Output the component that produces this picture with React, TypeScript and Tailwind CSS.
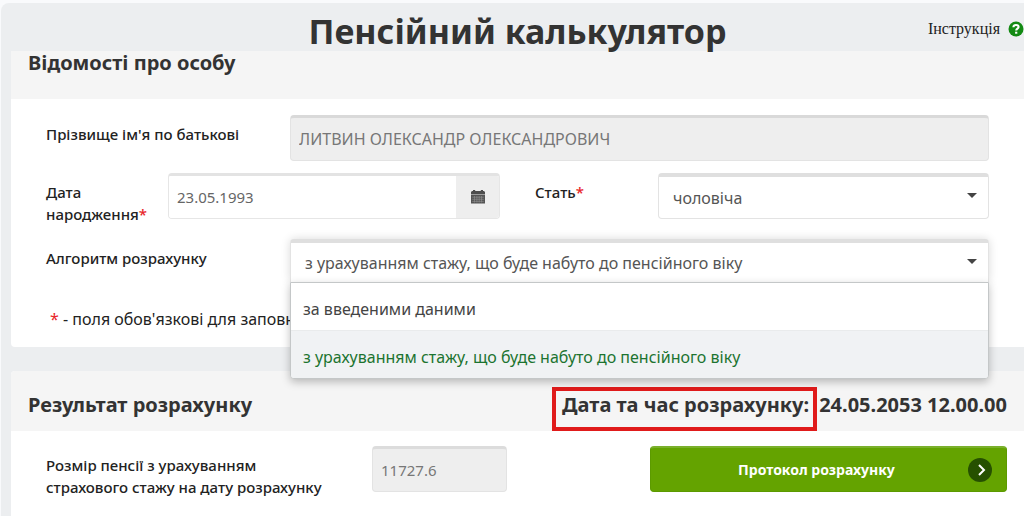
import React, { useState } from 'react';

interface AlgorithmOption {
  value: string;
  label: string;
}

const algorithms: AlgorithmOption[] = [
  { value: 'entered', label: 'за введеними даними' },
  { value: 'projected', label: 'з урахуванням стажу, що буде набуто до пенсійного віку' },
];

function CalendarIcon() {
  return (
    <svg viewBox="0 0 14 15" className="h-[15px] w-[14px]" aria-hidden="true">
      <path d="M1 1h1V0h2.200v1h5.600V0H12v1h1l1 1v2.400H0V2z" fill="#4d4d4d" />
      <path d="M0 5h14v8.500H0z" fill="#555" />
      <path d="M1.200 7.200h11.600M1.200 9.300h11.600M1.200 11.400h11.600M3.500 6v6.500M5.900 6v6.500M8.200 6v6.500M10.500 6v6.500" stroke="#929292" strokeWidth=".6" />
    </svg>
  );
}

function HelpIcon() {
  return (
    <svg viewBox="0 0 16 16" className="h-4 w-4 shrink-0" aria-hidden="true">
      <circle cx="8" cy="8" r="7.5" fill="#138a13" />
      <path d="M5.400 6.200C5.500 4.600 6.600 4 8 4c1.500 0 2.600.8 2.600 2 0 1.600-2.400 1.700-2.400 3.500" fill="none" stroke="#fff" strokeWidth="2.100" />
      <path d="M7.100 10.700h2.200v2H7.100z" fill="#fff" />
    </svg>
  );
}

function Caret() {
  return (
    <svg viewBox="0 0 10 5" className="pointer-events-none absolute top-5 right-3 h-[5px] w-[10px]" aria-hidden="true">
      <path d="M0 0h10L5 5z" fill="#444" />
    </svg>
  );
}

function Required() {
  return <span className="text-[#e8262a]">*</span>;
}

export default function App() {
  const [algorithm, setAlgorithm] = useState('projected');
  const [menuOpen, setMenuOpen] = useState(true);

  return (
    <div className="min-h-screen overflow-x-hidden bg-[#f9fafc] pt-[3px] pl-px font-['Noto_Sans','Open_Sans',sans-serif] text-[15px] leading-[22px] text-[#222]">
      <div className="min-h-screen rounded-tl-lg bg-[#eceef0] pl-[10px]">
        <header className="grid h-12 grid-cols-[1fr_auto_1fr] items-center">
          <h1 className="col-start-2 pt-2 text-[34px] leading-10 font-bold text-[#333]">Пенсійний калькулятор</h1>
          <a href="#help" className="flex items-center gap-2 justify-self-end pt-1 font-['Liberation_Serif',serif] text-base text-[#222]">
            Інструкція
            <HelpIcon />
          </a>
        </header>

        {/* Personal data */}
        <section className="rounded-bl bg-white">
          <h2 className="h-12 bg-[#f5f5f5] px-[17px] text-xl leading-6 font-bold text-[#333]">Відомості про особу</h2>

          <div className="px-[35px] pt-4 pb-[17px]">
            <div className="grid grid-cols-[244fr_699fr]">
              <label htmlFor="fullname" className="pt-2 font-medium">Прізвище ім'я по батькові</label>
              <input
                id="fullname"
                readOnly
                value="ЛИТВИН ОЛЕКСАНДР ОЛЕКСАНДРОВИЧ"
                className="h-[46px] w-full rounded border border-t-[3px] border-[#e3e3e3] border-t-[#d9d9d9] bg-[#eee] px-2 text-base text-[#777]"
              />
            </div>

            <div className="mt-3 grid grid-cols-[122fr_332fr_35fr_123fr_331fr]">
              <label htmlFor="birth" className="pt-2 font-medium">Дата народження<Required /></label>
              <div className="flex h-[46px] overflow-hidden rounded border border-t-[3px] border-[#e6e6e6] border-t-[#e3e3e3]">
                <input id="birth" defaultValue="23.05.1993" className="min-w-0 flex-1 bg-white px-2 text-[#666]" />
                <button type="button" aria-label="Календар" className="flex w-[43px] items-center justify-center bg-[#eee]">
                  <CalendarIcon />
                </button>
              </div>
              <label htmlFor="sex" className="col-start-4 pt-2 font-medium">Стать<Required /></label>
              <div className="relative">
                <select id="sex" className="block h-[46px] w-full appearance-none rounded border border-t-4 border-[#e3e3e3] border-t-[#dfdfdf] bg-white px-[14px] text-base text-[#555]">
                  <option>чоловіча</option>
                  <option>жіноча</option>
                </select>
                <Caret />
              </div>
            </div>

            <div className="mt-[14px] grid grid-cols-[244fr_699fr]">
              <label htmlFor="algorithm" className="pt-2 font-medium">Алгоритм розрахунку</label>
              <div className="relative">
                <select
                  id="algorithm"
                  value={algorithm}
                  onChange={(e) => setAlgorithm(e.target.value)}
                  onFocus={() => setMenuOpen(true)}
                  className="block h-[43px] w-full appearance-none rounded-t border border-t-4 border-b-0 border-[#e3e3e3] border-t-[#dfdfdf] bg-white px-[14px] text-base text-[#555] shadow-[0_0_10px_rgba(0,0,0,0.15)]"
                >
                  {algorithms.map((a) => (
                    <option key={a.value} value={a.value}>{a.label}</option>
                  ))}
                </select>
                <Caret />
                {menuOpen && (
                  <ul className="absolute top-full right-0 left-0 z-10 overflow-hidden rounded-b border border-[#c4c7c8] bg-white text-base shadow-[0_3px_8px_rgba(0,0,0,0.25)]">
                    {algorithms.map((a) => (
                      <li key={a.value} className="border-b border-[#e9ebec] last:border-b-0">
                        <button
                          type="button"
                          onClick={() => { setAlgorithm(a.value); setMenuOpen(false); }}
                          className={`block h-[47px] w-full px-3 pt-1 text-left ${a.value === algorithm ? 'bg-[#f0f2f4] text-[#1c7430]' : 'text-[#444]'}`}
                        >
                          {a.label}
                        </button>
                      </li>
                    ))}
                  </ul>
                )}
              </div>
            </div>

            <p className="mt-[26px] px-1 text-base leading-[22px]"><Required /> - поля обов'язкові для заповнення</p>
          </div>
        </section>

        {/* Calculation result */}
        <section className="mt-6 rounded-tl bg-white">
          <div className="flex h-[60px] items-center justify-between rounded-tl bg-[#f5f5f5] px-[17px] pt-2 text-xl font-bold text-[#333]">
            <h2>Результат розрахунку</h2>
            <p className="flex gap-[10px]">
              <span className="relative">
                Дата та час розрахунку:
                <span className="absolute -top-1 -right-2 -bottom-3 -left-2.5 border-4 border-[#e01b1b]" />
              </span>
              <span>24.05.2053 12.00.00</span>
            </p>
          </div>

          <div className="grid grid-cols-[326fr_135fr_143fr_357fr] pt-[15px] pr-[17px] pb-6 pl-[35px]">
            <label htmlFor="pension" className="pt-2 pr-10 font-medium">Розмір пенсії з урахуванням страхового стажу на дату розрахунку</label>
            <input
              id="pension"
              readOnly
              value="11727.6"
              className="h-[46px] w-full rounded border border-t-[3px] border-[#e3e3e3] border-t-[#dcdcdc] bg-[#eee] px-2 text-[#777]"
            />
            <button type="button" className="relative col-start-4 h-[46px] rounded border border-t-2 border-[#5c9a00] border-t-[#7ab02c] bg-[#64a300] pr-6 text-center text-sm font-bold text-white">
              Протокол розрахунку
              <span className="absolute top-[10px] right-[14px] flex h-6 w-6 items-center justify-center rounded-full bg-[#265000]">
                <svg viewBox="0 0 24 24" className="h-6 w-6" aria-hidden="true">
                  <path d="M11 7l5 5-5 5" fill="none" stroke="#fff" strokeWidth="2" />
                </svg>
              </span>
            </button>
          </div>
        </section>
      </div>
    </div>
  );
}
